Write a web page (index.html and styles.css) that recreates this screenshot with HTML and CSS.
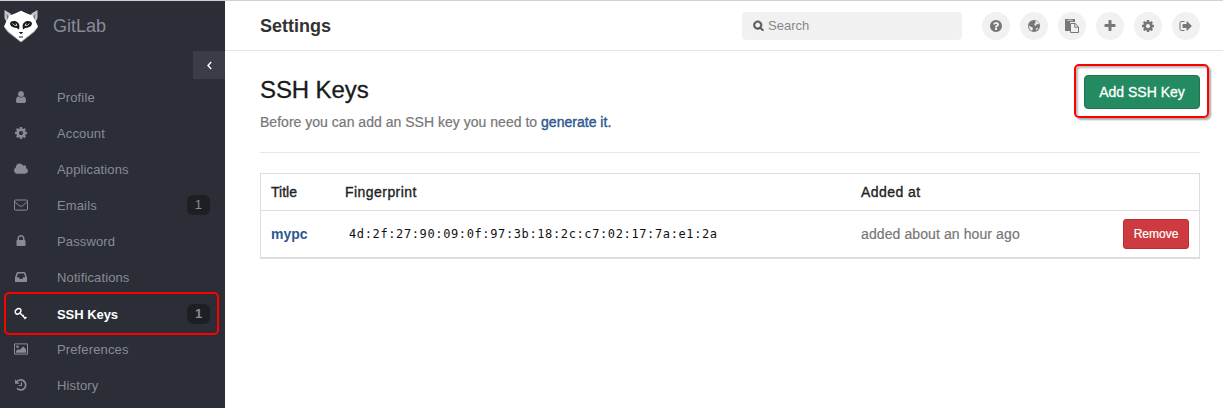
FILE: index.html
```
<!DOCTYPE html>
<html lang="en">
<head>
<meta charset="utf-8">
<title>SSH Keys · GitLab</title>
<link rel="stylesheet" href="styles.css">
</head>
<body>
<svg class="defs" aria-hidden="true">
  <symbol id="cog" viewBox="0 0 1792 1792"><path d="M1152 896q0-106-75-181t-181-75-181 75-75 181 75 181 181 75 181-75 75-181zm512-109v222q0 12-8 23t-20 13l-185 28q-19 54-39 91 35 50 107 138 10 12 10 25t-9 23q-27 37-99 108t-94 71q-12 0-26-9l-138-108q-44 23-91 38-16 136-29 186-7 28-36 28h-222q-14 0-24.500-8.500t-11.500-21.500l-28-184q-49-16-90-37l-141 107q-10 9-25 9-14 0-25-11-126-114-165-168-7-10-7-23 0-12 8-23 15-21 51-66.500t54-70.500q-27-50-41-99l-183-27q-13-2-21-12.500t-8-23.500v-222q0-12 8-23t19-13l186-28q14-46 39-92-40-57-107-138-10-12-10-24 0-10 9-23 26-36 98.500-107.500t94.500-71.500q13 0 26 10l138 107q44-23 91-38 16-136 29-186 7-28 36-28h222q14 0 24.500 8.500t11.500 21.500l28 184q49 16 90 37l142-107q9-9 24-9 13 0 25 10 129 119 165 170 7 8 7 22 0 12-8 23-15 21-51 66.500t-54 70.500q26 50 41 98l183 28q13 2 21 12.500t8 23.500z"/></symbol>
</svg>
<div class="page">
  <aside class="sidebar">
    <a class="brand">
      <svg class="logo" viewBox="0 0 36 34">
        <path d="M1.500 1L7.500 4.500L9 9L4 14L1.500 9ZM34.500 1L28.500 4.500L27 9L32 14L34.500 9Z" fill="#c4c5c8"/>
        <path d="M3.500 4.500L6 8.500L4.500 11.500ZM32.500 4.500L30 8.500L31.500 11.500Z" fill="#6d7078"/>
        <path d="M18 1.800L24 4.500L29.500 6.500L32.500 12L35 17.500L31 22.500L18 33L5 22.500L1 17.500L3.500 12L6.500 6.500L12 4.500Z" fill="#fff"/>
        <path d="M1.500 18.500L5 23L18 33L31 23L34.500 18.500" fill="none" stroke="#b0b1b5" stroke-width=".8"/>
        <path d="M7 14Q8 11.500 12 12Q16 13 16.500 17L16 20.500Q14 18.500 11 18.500Q7 17.500 7 14ZM29 14Q28 11.500 24 12Q20 13 19.500 17L20 20.500Q22 18.500 25 18.500Q29 17.500 29 14Z" fill="#17191d"/>
        <path d="M9.500 14.500Q11 17 14 16.500L13 14.500M26.500 14.500Q25 17 22 16.500L23 14.500" stroke="#ddd" stroke-width=".9" fill="none"/>
        <path d="M15.700 23H20.300L18 25.300ZM16 27.500H20V28.500H16Z" fill="#17191d"/>
      </svg>
      <span class="brand-name">GitLab</span>
    </a>
    <div class="collapse"><svg width="5" height="9" viewBox="0 0 5 9"><path d="M4.200 1L1 4.500L4.200 8" fill="none" stroke="#fff" stroke-width="1.400"/></svg></div>
    <nav class="nav">
      <a class="item"><svg class="icon" viewBox="0 0 1792 1792"><path d="M1536 1399q0 109-62.500 187t-150.500 78h-854q-88 0-150.500-78t-62.500-187q0-85 8.500-160.500t31.500-152 58.500-131 94-89 134.500-34.500q131 128 313 128t313-128q76 0 134.500 34.500t94 89 58.500 131 31.500 152 8.500 160.500zm-256-887q0 159-112.500 271.500t-271.500 112.500-271.500-112.500-112.500-271.500 112.500-271.500 271.500-112.500 271.500 112.500 112.500 271.500z"/></svg><span>Profile</span></a>
      <a class="item"><svg class="icon"><use href="#cog"/></svg><span>Account</span></a>
      <a class="item"><svg class="icon" viewBox="64 0 1920 1792"><path d="M1984 1152q0 159-112.500 271.500t-271.500 112.500h-1088q-185 0-316.500-131.500t-131.500-316.500q0-132 71-241.500t187-163.500q-2-28-2-43 0-212 150-362t362-150q158 0 286.500 88t187.500 230q70-62 166-62 106 0 181 75t75 181q0 75-41 138 129 30 213 134.500t84 239.500z"/></svg><span>Applications</span></a>
      <a class="item"><svg class="icon" viewBox="0 0 14 14"><path class="line" d="M1.600 2H12.400Q13.500 2 13.500 3.100V11Q13.500 12.100 12.400 12.100H1.600Q.5 12.100 .5 11V3.100Q.5 2 1.600 2ZM.7 3.500Q3 6 5.400 7.700Q7 9 8.600 7.700Q11 6 13.300 3.500"/></svg><span>Emails</span><b class="count">1</b></a>
      <a class="item"><svg class="icon" viewBox="0 0 1792 1792"><path d="M640 768h512v-192q0-106-75-181t-181-75-181 75-75 181v192zm832 96v576q0 40-28 68t-68 28h-960q-40 0-68-28t-28-68v-576q0-40 28-68t68-28h32v-192q0-184 132-316t316-132 316 132 132 316v192h32q40 0 68 28t28 68z"/></svg><span>Password</span></a>
      <a class="item"><svg class="icon" viewBox="0 0 14 14"><path fill-rule="evenodd" d="M3.700 2H10.300Q11 2 11.300 2.700L13 7.200V11.500Q13 12 12.500 12H1.500Q1 12 1 11.500V7.200L2.700 2.700Q3 2 3.700 2ZM4.100 3.600L2.600 7.300H4.900L5.700 8.900H8.300L9.100 7.300H11.400L9.900 3.600Z"/></svg><span>Notifications</span></a>
      <a class="item active"><svg class="icon" viewBox="0 0 14 14"><path class="line" d="M1.300 5.500Q.8 3.800 2.400 2.600Q4 1.200 5.800 1.700Q7.200 2.300 6.900 4Q6.400 6 4.800 6.800Q3 7.600 1.900 6.600Z" stroke-width="1.500"/><path class="line" d="M6 6L11.600 11.800M8.300 9.300L9.700 7.900M10.400 11.900L12.400 9.900" stroke-width="1.400"/></svg><span>SSH Keys</span><b class="count">1</b></a>
      <a class="item after"><svg class="icon" viewBox="0 0 14 14"><path class="line" d="M.5 1.900H13.500V12.100H.5Z"/><circle cx="3.500" cy="4.700" r="1.300"/><path d="M2 10.700V9L4.200 6.900L5.500 8.100L9.200 4.500L12 7.300V10.700Z"/></svg><span>Preferences</span></a>
      <a class="item"><svg class="icon" viewBox="0 0 14 14"><path class="line" d="M2.500 4.200A5 5 0 1 1 3 10.300" stroke-width="1.700"/><path d="M1 1.300V5.800H5.500Z"/><path class="line" d="M7.400 4.200V7.500H4.800" stroke-width="1.200"/></svg><span>History</span></a>
    </nav>
  </aside>
  <div class="main">
    <header class="topbar">
      <h1 class="title">Settings</h1>
      <div class="search"><svg class="search-icon" viewBox="0 0 1792 1792"><path d="M1216 832q0-185-131.500-316.500t-316.500-131.500-316.500 131.500-131.500 316.500 131.500 316.500 316.500 131.500 316.500-131.500 131.500-316.500zm512 832q0 52-38 90t-90 38q-54 0-90-38l-343-342q-179 124-399 124-143 0-273.500-55.500t-225-150-150-225-55.500-273.500 55.500-273.500 150-225 225-150 273.500-55.500 273.500 55.500 225 150 150 225 55.500 273.500q0 220-124 399l343 343q37 37 37 90z"/></svg><span>Search</span></div>
      <div class="actions">
        <a class="round"><svg class="icon" viewBox="0 0 1792 1792"><path d="M1024 1376v-192q0-14-9-23t-23-9h-192q-14 0-23 9t-9 23v192q0 14 9 23t23 9h192q14 0 23-9t9-23zm256-672q0-88-55.500-163t-138.500-116-170-41q-243 0-371 213-15 24 8 42l132 100q7 6 19 6 16 0 25-12 53-68 86-92 34-24 86-24 48 0 85.500 26t37.500 59q0 38-20 61t-68 45q-63 28-115.500 86.500t-52.500 125.500v36q0 14 9 23t23 9h192q14 0 23-9t9-23q0-19 21.500-49.500t54.500-49.500q32-18 49-28.500t46-35 44.500-48 28-60.500 12.500-81zm384 192q0 209-103 385.500t-279.500 279.500-385.500 103-385.500-103-279.500-279.500-103-385.500 103-385.500 279.500-279.500 385.500-103 385.500 103 279.500 279.500 103 385.500z"/></svg></a>
        <a class="round"><svg class="icon" viewBox="0 0 14 14"><circle cx="7" cy="7" r="6"/><path d="M8.300 2L9.800 2L11.700 3.700L12.100 5.600L10.700 4.800L9.500 5.500L8.600 6.900L7.600 6.200L7.300 4.800L8.700 3.900ZM1.800 6.600L3.400 7.400L5.400 8.500L6 9.700L4.900 11.800L3 10.500ZM9.500 9L11 8.700L10.300 10.400L8.800 11.500Z" fill="#f1f1f1"/></svg></a>
        <a class="round"><svg class="icon" viewBox="0 0 14 14"><path d="M0 0H10V3H5V12H0Z"/><path d="M2.200 1.300H7.800" stroke="#f1f1f1" stroke-width=".8"/><path d="M5.500 4.500H10.200L13.500 7.800V13.500H5.500Z" fill="#f1f1f1" stroke="#777"/><path class="line" d="M9.800 4.500V8.200H13.500"/></svg></a>
        <a class="round"><svg class="icon" viewBox="0 0 1792 1792"><path d="M1600 736v192q0 40-28 68t-68 28h-416v416q0 40-28 68t-68 28h-192q-40 0-68-28t-28-68v-416h-416q-40 0-68-28t-28-68v-192q0-40 28-68t68-28h416v-416q0-40 28-68t68-28h192q40 0 68 28t28 68v416h416q40 0 68 28t28 68z"/></svg></a>
        <a class="round"><svg class="icon"><use href="#cog"/></svg></a>
        <a class="round"><svg class="icon" viewBox="0 0 1792 1792"><path d="M704 1440q0 4 1 20t.5 26.500-3 23.500-10 19.500-20.500 6.500h-320q-119 0-203.500-84.500t-84.500-203.500v-704q0-119 84.500-203.500t203.500-84.500h320q13 0 22.500 9.500t9.500 22.500q0 4 1 20t.5 26.500-3 23.500-10 19.500-20.500 6.500h-320q-66 0-113 47t-47 113v704q0 66 47 113t113 47h312l11.500 1 11.500 3 8 5.500 7 9 2 13.500zm928-544q0 26-19 45l-544 544q-19 19-45 19t-45-19-19-45v-288h-448q-26 0-45-19t-19-45v-384q0-26 19-45t45-19h448v-288q0-26 19-45t45-19 45 19l544 544q19 19 19 45z"/></svg></a>
      </div>
    </header>
    <main class="content">
      <div class="intro">
        <div>
          <h2 class="heading">SSH Keys</h2>
          <p class="lead">Before you can add an SSH key you need to <a class="link">generate it.</a></p>
        </div>
        <div class="callout"><a class="add">Add SSH Key</a></div>
      </div>
      <div class="keys">
        <div class="row head"><span>Title</span><span class="wide">Fingerprint</span><span class="wide">Added at</span></div>
        <div class="row"><a class="key-name">mypc</a><code class="print">4d:2f:27:90:09:0f:97:3b:18:2c:c7:02:17:7a:e1:2a</code><span class="ago">added about an hour ago</span><a class="remove">Remove</a></div>
      </div>
    </main>
  </div>
</div>
</body>
</html>
```
FILE: styles.css
```
* { box-sizing: border-box; }
body { margin: 0; background: #fff; font-family: "Liberation Sans", Arial, sans-serif; font-size: 14px; }
h1, h2, p { margin: 0; font-weight: normal; }
.defs { display: none; }
.page { display: flex; height: 408px; border-top: 1px solid #d0d0d0; overflow: hidden; }
.icon { width: 14px; height: 14px; flex: none; fill: currentColor; display: block; }
.line { fill: none; stroke: currentColor; }

.sidebar { width: 225px; flex: none; background: #2b2e37; color: #888b96; display: flex; flex-direction: column; }
.brand { height: 50px; display: flex; align-items: center; padding-left: 3px; gap: 14px; }
.logo { width: 36px; height: 34px; }
.brand-name { font-size: 18px; }
.collapse { align-self: flex-end; width: 32px; height: 28px; background: #3a3d46; display: flex; align-items: center; justify-content: center; }
.nav { display: flex; flex-direction: column; }
.item { height: 36px; display: flex; align-items: center; padding: 0 15px 0 14px; font-size: 13px; letter-spacing: .13px; }
.item span { margin-left: 29px; }
.count { margin-left: auto; width: 23px; height: 20px; line-height: 20px; border-radius: 6px; background: #1d1f23; text-align: center; font-weight: normal; }
.item.active { height: 43px; margin: -3px 6px -4px 4px; padding: 1px 7px 0 8px; border: 2px solid #f00; border-radius: 5px; color: #fff; font-weight: bold; letter-spacing: -.05px; }
.active .count { color: #888b96; font-weight: bold; }

.main { flex: 1; }
.topbar { height: 50px; border-bottom: 1px solid #e5e5e5; display: flex; align-items: center; padding: 0 23px 0 35px; }
.title { font-size: 18px; font-weight: bold; color: #333; flex: 1; padding-top: 2px; }
.search { width: 220px; height: 28px; border-radius: 4px; background: #f1f1f1; display: flex; align-items: center; padding-left: 11px; gap: 4px; font-size: 13px; color: #888; }
.search-icon { width: 11px; height: 11px; fill: #555; stroke: #555; stroke-width: 80; }
.actions { display: flex; gap: 10px; margin-left: 20px; }
.round { width: 28px; height: 28px; border-radius: 50%; background: #f1f1f1; color: #777; display: flex; align-items: center; justify-content: center; }

.content { padding: 13px 14px 0 35px; }
.intro { height: 89px; display: flex; justify-content: space-between; margin-right: 9px; border-bottom: 1px solid #e7e7e7; }
.heading { font-size: 24px; line-height: 28px; color: #1a1a1a; margin-top: 12px; letter-spacing: -.1px; -webkit-text-stroke: .3px; }
.lead { font-size: 14px; line-height: 20px; color: #777; margin-top: 8px; letter-spacing: .02px; -webkit-text-stroke: .2px; }
.link { color: #2f578f; -webkit-text-stroke: .4px; }
.callout { height: 54px; margin-right: -9px; padding: 9px 7px 7px 8px; border: 2px solid #f00; border-radius: 5px; box-shadow: 2px 2px 2px #aaa, inset 2px 2px 2px #bbb; }
.add { display: block; width: 116px; height: 34px; line-height: 32px; border: 1px solid #1b7651; border-radius: 4px; background: #238a62; color: #fff; font-size: 14px; text-align: center; -webkit-text-stroke: .3px; }

.keys { margin: 20px 9px 0 0; border: 1px solid #ddd; border-bottom-width: 2px; }
.row { display: grid; grid-template-columns: 74px 516px 1fr auto; align-items: center; height: 46px; padding: 0 10px; }
.row.head { height: 37px; border-bottom: 1px solid #ddd; color: #222; -webkit-text-stroke: .35px; }
.wide { letter-spacing: .45px; }
.key-name { color: #2f578f; font-weight: bold; }
.print { font: 12px "DejaVu Sans Mono", monospace; letter-spacing: .62px; color: #111; padding-left: 4px; }
.ago { color: #777; letter-spacing: .1px; -webkit-text-stroke: .2px; }
.remove { width: 66px; height: 30px; line-height: 28px; border: 1px solid #bd2d32; border-radius: 3px; background: #cd3b40; color: #fff; font-size: 12px; text-align: center; -webkit-text-stroke: .2px; }
```
